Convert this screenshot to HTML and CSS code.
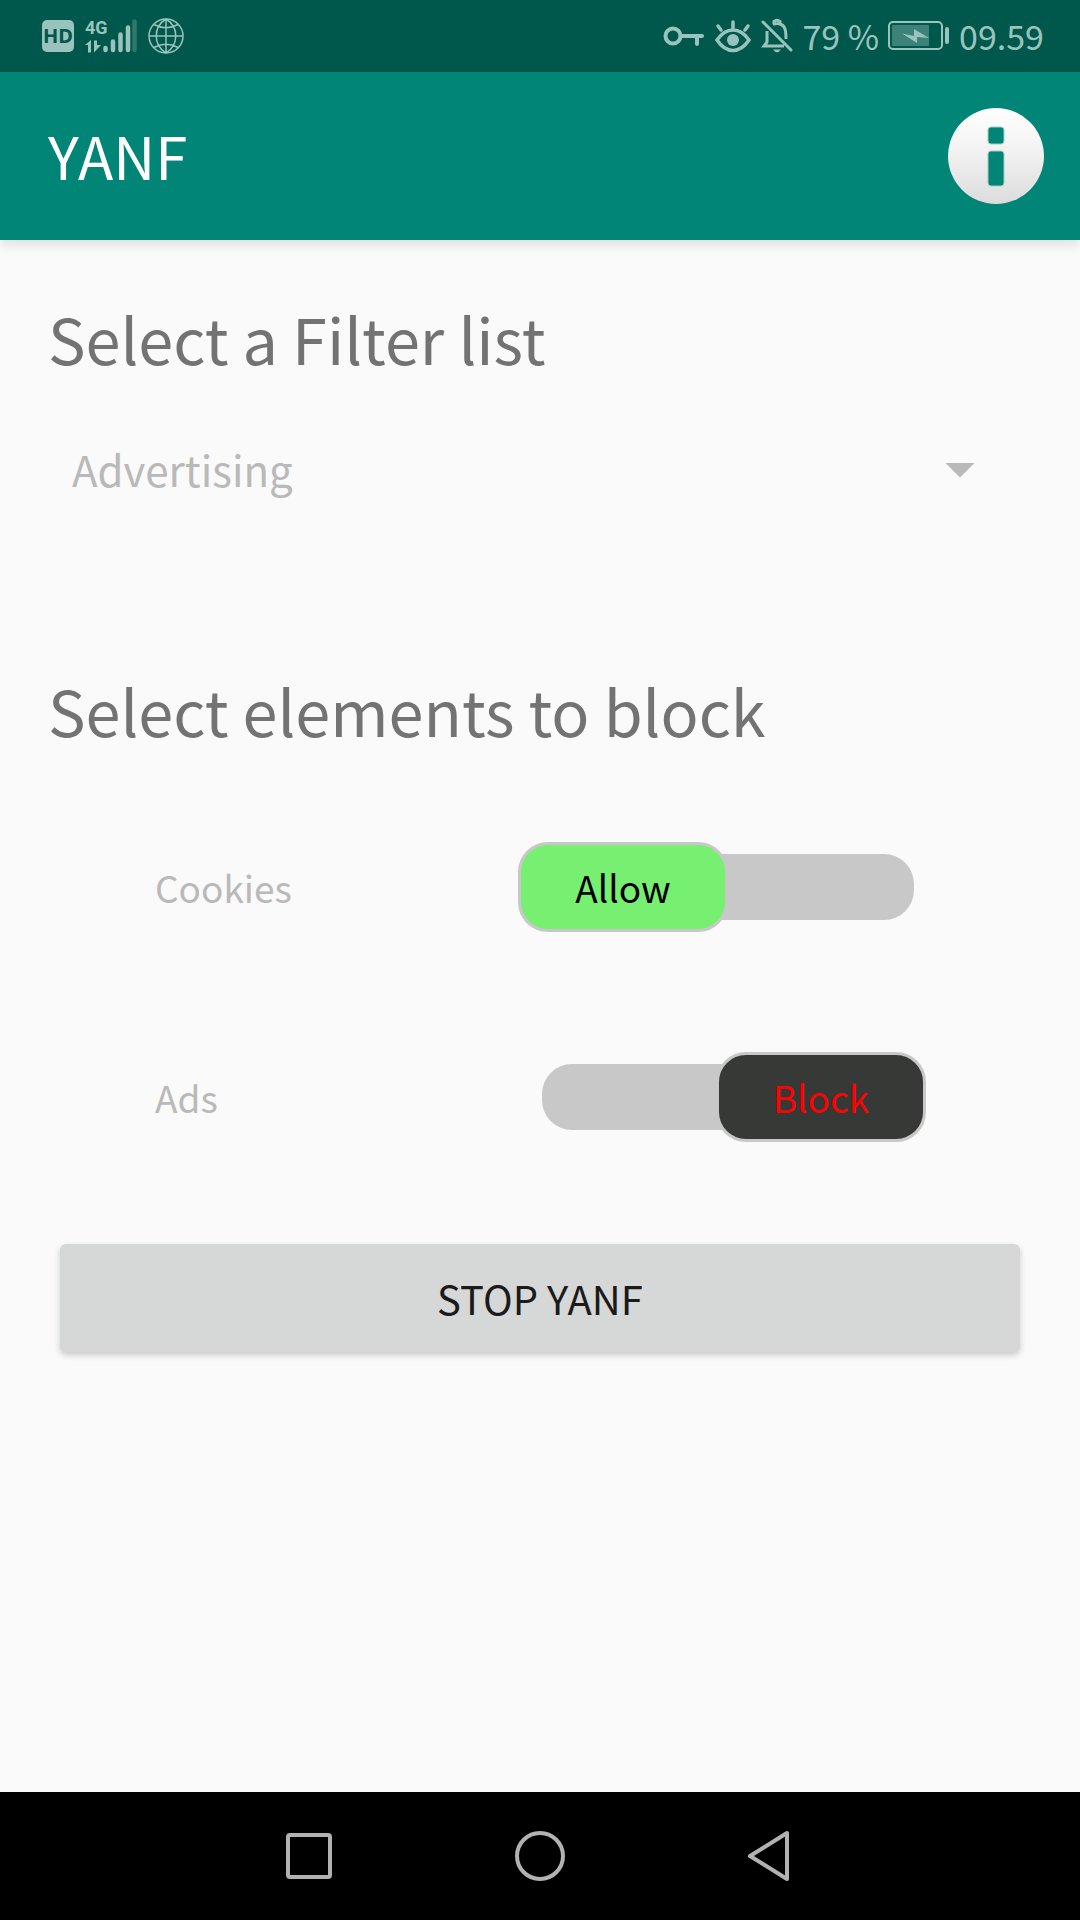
FILE: index.html
```html
<!DOCTYPE html>
<html lang="en">
<head>
<meta charset="utf-8">
<meta name="viewport" content="width=device-width, initial-scale=1">
<title>YANF</title>
<link rel="stylesheet" href="styles.css">
</head>
<body>
<div class="status">
  <div class="status-group">
    <span class="hd">HD</span>
    <svg class="signal" width="52" height="36" viewBox="0 0 52 36" aria-hidden="true">
      <text class="network" x="0" y="16">4G</text>
      <path d="M0 27 6 22V34.500H3V27ZM9 22.500V34.500L16 27H12V22.500Z" fill="currentColor"/>
      <g stroke="currentColor" stroke-width="4.500" stroke-linecap="round">
        <path d="M20.500 30V32M28 23.500V32M35.500 16.500V32M43 9.500V32"/>
        <path d="M49.500 3.500V32" opacity=".3"/>
      </g>
    </svg>
    <svg width="36" height="36" viewBox="0 0 36 36" fill="none" stroke="currentColor" stroke-width="1.500" aria-hidden="true">
      <circle cx="18" cy="18" r="17"/>
      <path d="M18 1V35M1 18H35M18 1C5 9 5 27 18 35M18 1C31 9 31 27 18 35M6 6.500Q18 13 30 6.500M6 29.500Q18 23 30 29.500"/>
    </svg>
  </div>
  <div class="status-group status-right">
    <svg width="42" height="34" viewBox="0 0 42 34" fill="none" stroke="currentColor" stroke-width="4" stroke-linecap="round" aria-hidden="true">
      <circle cx="10" cy="17" r="7.500"/><path d="M18 17H39M34 17V25"/>
    </svg>
    <svg width="38" height="36" viewBox="0 0 38 36" fill="none" stroke="currentColor" stroke-width="3.500" stroke-linecap="round" aria-hidden="true">
      <path d="M3 22Q10 12 19 12T35 22Q28 32.500 19 32.500T3 22ZM19 4V10M4 8 7 12M34 8 31 12"/>
      <circle cx="19" cy="22" r="6" fill="currentColor" stroke="none"/>
    </svg>
    <svg width="32" height="36" viewBox="0 0 32 36" fill="none" stroke="currentColor" stroke-width="3" aria-hidden="true">
      <path d="M2 4 30 32" stroke-linecap="round"/>
      <path d="M6 13V24L3 28H23M12 6.500C14 5.500 18 5.500 20 6.500C24 8 25 12 25 21M13 6V3.500Q16 1 19 3.500V7"/>
      <path d="M12 31.500H20Q16 37 12 31.500Z" fill="currentColor" stroke="none"/>
    </svg>
    <span class="percent">79 %</span>
    <svg class="battery" width="62" height="30" viewBox="0 0 62 30" aria-hidden="true">
      <rect x="1" y="1" width="53" height="27" rx="4" fill="none" stroke="currentColor" stroke-width="2"/>
      <rect x="4" y="4" width="37" height="21" rx="1" fill="currentColor" opacity=".4"/>
      <path d="M14 12.500 26 15V8L41 17 29 16V22Z" fill="currentColor"/>
      <rect x="57" y="6" width="4" height="17" rx="2" fill="currentColor"/>
    </svg>
    <time>09.59</time>
  </div>
</div>

<header class="appbar">
  <h1>YANF</h1>
  <button class="info" type="button" aria-label="Information">
    <svg viewBox="0 0 96 96" aria-hidden="true">
      <defs><linearGradient id="face" x1="0" y1="0" x2="0" y2="1">
        <stop offset="0" stop-color="#ffffff"/><stop offset=".45" stop-color="#f2f2f2"/><stop offset="1" stop-color="#dcdcdc"/>
      </linearGradient></defs>
      <circle cx="48" cy="48" r="48" fill="url(#face)"/>
      <g fill="#008577" stroke="#a9c9c4" stroke-width="1">
        <rect x="40" y="19" width="16" height="17" rx="3"/>
        <rect x="40" y="43" width="16" height="35" rx="3"/>
      </g>
    </svg>
  </button>
</header>

<main>
  <h2><label for="filter">Select a Filter list</label></h2>
  <div class="spinner">
    <select id="filter" disabled><option>Advertising</option></select>
  </div>

  <h2>Select elements to block</h2>
  <div class="options">
    <label class="option">
      <span>Cookies</span>
      <span class="switch">
        <input type="checkbox">
        <span class="thumb allow">Allow</span>
      </span>
    </label>
    <label class="option">
      <span>Ads</span>
      <span class="switch">
        <input type="checkbox" checked>
        <span class="thumb block">Block</span>
      </span>
    </label>
  </div>
  <button class="stop" type="button">STOP YANF</button>
</main>

<nav class="navbar">
  <button type="button" aria-label="Recent apps">
    <svg width="48" height="52" viewBox="0 0 48 52"><rect x="3" y="5" width="42" height="42" rx="2"/></svg>
  </button>
  <button type="button" aria-label="Home">
    <svg width="52" height="52" viewBox="0 0 52 52"><circle cx="26" cy="26" r="23"/></svg>
  </button>
  <button type="button" aria-label="Back">
    <svg width="48" height="52" viewBox="0 0 48 52"><path d="M40 3V49L3 26Z"/></svg>
  </button>
</nav>
</body>
</html>
```
FILE: styles.css
```css
* {
  box-sizing: border-box;
}

body {
  margin: 0;
  min-height: 100vh;
  display: flex;
  flex-direction: column;
  background: #fafafa;
  color: #737373;
  font-family: "Noto Sans CJK SC", "Noto Sans", sans-serif;
  font-size: 40px;
}

button,
select {
  padding: 0;
  border: 0;
  background: none;
  font: inherit;
}

svg {
  display: block;
}

.status {
  height: 72px;
  padding: 0 36px 0 42px;
  display: flex;
  align-items: center;
  justify-content: space-between;
  background: #00574b;
  color: #99c3bc;
  font-size: 34px;
  line-height: 40px;
}

.status-group {
  display: flex;
  align-items: center;
  gap: 11px;
}

.hd {
  width: 32px;
  border-radius: 5px;
  background: #99c3bc;
  color: #00574b;
  font: bold 20px/32px "Noto Sans", sans-serif;
  text-align: center;
}

.network {
  fill: currentColor;
  font: bold 18px Roboto, sans-serif;
}

.status-right {
  gap: 9px;
}

.appbar {
  height: 168px;
  padding: 0 36px 0 48px;
  display: flex;
  align-items: center;
  justify-content: space-between;
  background: #008577;
  box-shadow: 0 4px 12px rgba(0, 0, 0, 0.12);
}

h1 {
  margin: 0;
  padding-bottom: 2px;
  color: #fff;
  font-size: 58px;
  font-weight: 400;
  line-height: 80px;
}

.info {
  width: 96px;
  height: 96px;
}

main {
  flex: 1;
  padding: 50px 48px;
}

h2 {
  margin: 0;
  font-size: 63px;
  font-weight: 400;
  line-height: 96px;
}

.spinner {
  margin: 36px 0 144px;
  padding: 0 57px 0 24px;
  display: flex;
  align-items: center;
}

.spinner::after {
  content: "";
  width: 30px;
  height: 15px;
  background: #b9b9b9;
  clip-path: polygon(0 0, 100% 0, 50% 100%);
}

select {
  flex: 1;
  height: 96px;
  padding-bottom: 4px;
  appearance: none;
  color: #b9b9b9;
  opacity: 1;
  font-size: 42px;
}

.options {
  margin: 84px 106px 102px 107px;
  display: grid;
  gap: 120px;
  color: #b9b9b9;
  font-size: 37px;
}

.option {
  display: flex;
  align-items: center;
  justify-content: space-between;
  line-height: 60px;
}

.switch {
  width: 408px;
  display: grid;
  align-items: center;
}

.switch > * {
  grid-area: 1 / 1;
}

.switch input {
  height: 66px;
  margin: 0 12px 0 24px;
  appearance: none;
  border-radius: 30px;
  background: #c8c8c8;
}

.thumb {
  z-index: 1;
  width: 210px;
  border: 3px solid #c8c8c8;
  border-radius: 30px;
  line-height: 84px;
  text-align: center;
}

.allow {
  background: #77ef70;
  color: #000;
}

.block {
  justify-self: end;
  background: #373936;
  color: #f80404;
}

.stop {
  display: block;
  width: calc(100% - 24px);
  height: 108px;
  margin: 0 12px;
  border-radius: 6px;
  background: #d6d8d7;
  box-shadow: 0 3px 6px rgba(0, 0, 0, 0.2);
  color: #1b1b1b;
}

.navbar {
  height: 128px;
  padding: 0 193px;
  display: grid;
  grid-template-columns: repeat(3, 1fr);
  justify-items: center;
  align-items: center;
  background: #000;
}

.navbar svg {
  fill: none;
  stroke: #b2b2b2;
  stroke-width: 4;
  stroke-linejoin: round;
}
```
